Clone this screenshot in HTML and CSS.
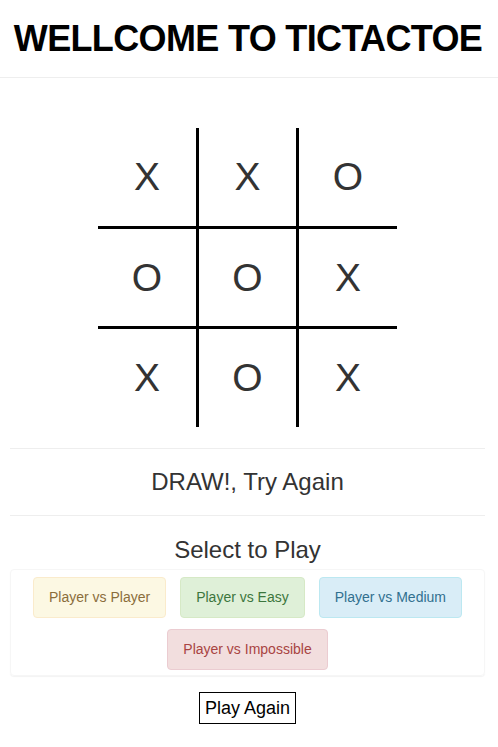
FILE: index.html
```html
<!DOCTYPE html>
<html>
<head>
<meta charset="utf-8">
<title>TicTacToe</title>
<link rel="stylesheet" href="styles.css">
</head>
<body>
<header class="top">
  <h1 class="title">WELLCOME TO TICTACTOE</h1>
</header>
<main class="wrap">
  <div class="board">
    <div class="cell">X</div><div class="cell">X</div><div class="cell">O</div>
    <div class="cell">O</div><div class="cell">O</div><div class="cell">X</div>
    <div class="cell">X</div><div class="cell">O</div><div class="cell">X</div>
  </div>
  <div class="status">DRAW!, Try Again</div>
  <h3 class="select">Select to Play</h3>
  <div class="panel">
    <button class="mode warning">Player vs Player</button>
    <button class="mode success">Player vs Easy</button>
    <button class="mode info">Player vs Medium</button>
    <button class="mode danger">Player vs Impossible</button>
  </div>
  <div class="again-row">
    <button class="again">Play Again</button>
  </div>
</main>
</body>
</html>
```
FILE: styles.css
```css
html, body {
  margin: 0;
  padding: 0;
  background: #fff;
}
body {
  font-family: "Liberation Sans", Arial, Helvetica, sans-serif;
  color: #333;
}
.top {
  height: 77px;
  border-bottom: 1px solid #eee;
  display: flex;
  align-items: center;
  justify-content: center;
}
.title {
  margin: 0;
  font-size: 36px;
  letter-spacing: -0.65px;
  font-weight: bold;
  color: #000;
  line-height: 1;
  white-space: nowrap;
  padding-right: 2px;
}
.wrap {
  width: 475px;
  margin-left: 10px;
}
.board {
  margin: 50px auto 0;
  width: 299px;
  display: grid;
  grid-template-columns: 98px 97px 98px;
  grid-template-rows: 98px 97px 98px;
  gap: 3px;
  background: #000;
}
.cell {
  background: #fff;
  display: flex;
  align-items: center;
  justify-content: center;
  font-size: 39px;
  color: #333;
}
.status {
  margin-top: 21px;
  height: 66px;
  border-top: 1px solid #eee;
  border-bottom: 1px solid #eee;
  display: flex;
  align-items: center;
  justify-content: center;
  font-size: 24px;
}
.select {
  margin: 20px 0 0;
  height: 33px;
  font-size: 24px;
  font-weight: normal;
  line-height: 28px;
  text-align: center;
}
.panel {
  box-sizing: border-box;
  height: 107px;
  padding: 7px 10px 0;
  border: 1px solid #f6f6f6;
  border-radius: 4px;
  box-shadow: 0 1px 1px rgba(0, 0, 0, 0.05);
  display: flex;
  flex-wrap: wrap;
  justify-content: center;
  align-content: flex-start;
  column-gap: 14px;
  row-gap: 11px;
}
.mode {
  font-family: inherit;
  font-size: 14px;
  line-height: 19px;
  padding: 10px 15px;
  border: 1px solid;
  border-radius: 4px;
  cursor: pointer;
}
.warning { background: #fcf8e3; border-color: #faebcc; color: #8a6d3b; }
.success { background: #dff0d8; border-color: #d6e9c6; color: #3c763d; }
.info { background: #d9edf7; border-color: #bce8f1; color: #31708f; }
.danger { background: #f2dede; border-color: #ebccd1; color: #a94442; }
.again-row {
  display: flex;
  justify-content: center;
  margin-top: 16px;
}
.again {
  font-family: inherit;
  font-size: 18px;
  line-height: 22px;
  color: #000;
  background: #fff;
  border: 1px solid #000;
  border-radius: 0;
  padding: 4px 5px;
}
```
